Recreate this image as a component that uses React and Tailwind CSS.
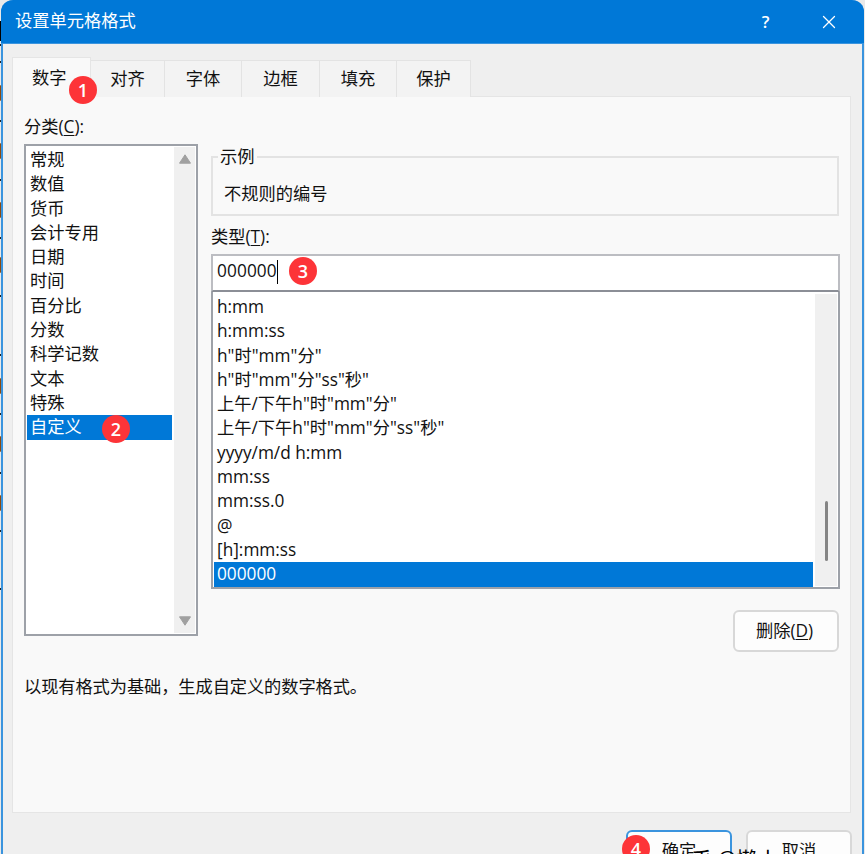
import { X } from 'lucide-react';

const TABS = [
  { label: '对齐', width: 'w-[74px]' },
  { label: '字体', width: 'w-[77px]' },
  { label: '边框', width: 'w-[78px]' },
  { label: '填充', width: 'w-[77px]' },
  { label: '保护', width: 'w-[74px]' },
];

const CATEGORIES = ['常规', '数值', '货币', '会计专用', '日期', '时间', '百分比', '分数', '科学记数', '文本', '特殊', '自定义'];

const FORMATS = [
  'h:mm',
  'h:mm:ss',
  'h"时"mm"分"',
  'h"时"mm"分"ss"秒"',
  '上午/下午h"时"mm"分"',
  '上午/下午h"时"mm"分"ss"秒"',
  'yyyy/m/d h:mm',
  'mm:ss',
  'mm:ss.0',
  '@',
  '[h]:mm:ss',
  '000000',
];

// worksheet rows that show in the strip left of the dialog
const SHEET_ROWS = [44, 61, 120, 179, 237, 295, 354, 413, 472, 530, 588];
const SHEET_DOTS = [93, 151, 210, 265, 386, 444, 503];

function Step({ n, className }) {
  return (
    <span className={`absolute flex h-7 w-7 items-center justify-center rounded-full bg-[#fd3438] text-[18px] leading-none font-semibold text-white ${className}`}>
      {n}
    </span>
  );
}

function Key({ children }) {
  return <span className="underline decoration-1 underline-offset-[2px]">{children}</span>;
}

export default function App() {
  return (
    <div className="relative h-[854px] w-[865px] overflow-hidden bg-[#e9e9e9] pl-[1px] font-['Open_Sans','Noto_Sans_CJK_SC',sans-serif] text-[17.25px] leading-6 text-[#111]">
      <div className="absolute top-[21px] left-0 h-[20px] w-[2px] bg-black" />
      {SHEET_ROWS.map((y) => (
        <div key={y} className="absolute left-0 h-[2px] w-[2px] bg-[#222]" style={{ top: y }} />
      ))}
      {SHEET_DOTS.map((y) => (
        <div key={y} className="absolute -left-1 h-4 w-[6px] rounded-full bg-[#8a4a10]" style={{ top: y - 8 }} />
      ))}

      <div className="relative flex h-[870px] w-[863px] flex-col rounded-t-[12px] border-x-2 border-[#3a94de] bg-[#efefef]">
        <header className="-mx-[2px] flex h-11 shrink-0 items-center rounded-t-[12px] border-b border-[#3a94de] bg-[#0078d7] pl-[14px] text-white">
          <span className="relative -top-[1px] grow">设置单元格格式</span>
          <span className="w-[15px] text-center text-[17px] font-semibold">?</span>
          <X className="mr-[24px] ml-[45px] h-[22px] w-[22px]" strokeWidth={1.4} />
        </header>

        <div className="pl-[9px]">
          <nav className="relative z-10 mt-[13px] flex h-10 items-end">
            <div className="relative h-[41px] w-[79px] self-start border border-b-0 border-[#e5e5e5] bg-[#f9f9f9] pt-[8px] pl-[19px]">
              数字
              <Step n={1} className="top-[18px] left-[56px]" />
            </div>
            {TABS.map((t) => (
              <div key={t.label} className={`-z-10 flex h-[37px] items-center justify-center border-t border-r border-[#e3e3e3] bg-[#f3f3f3] ${t.width}`}>
                {t.label}
              </div>
            ))}
          </nav>

          <main className="-mt-px flex h-[717px] w-[839px] flex-col border border-[#e5e5e5] bg-[#f9f9f9] pl-[11px]">
            <div className="flex">
              <section className="w-[174px] pt-[18px]">
                <div>分类(<Key>C</Key>):</div>
                <div className="mt-[5px] flex h-[492px] border-2 border-[#9da1a8] bg-white">
                  <ul className="w-[148px] pt-[2px] pr-[2px] pl-px">
                    {CATEGORIES.map((c, i) => (
                      <li key={c} className={`relative h-[24.3px] pl-[3px] ${i === 11 ? 'bg-[#0078d7] text-white' : ''}`}>
                        {c}
                        {i === 11 && <Step n={2} className="top-0 left-[75px]" />}
                      </li>
                    ))}
                  </ul>
                  <div className="my-px flex w-[21px] flex-col items-center justify-between bg-[#f0f0f0] py-[7px]">
                    <svg width="12" height="10" viewBox="0 0 12 10" fill="#a0a0a0"><path d="M6 .8 11.5 9.2H.5Z" stroke="#a0a0a0" strokeLinejoin="round" /></svg>
                    <svg width="12" height="10" viewBox="0 0 12 10" fill="#a0a0a0"><path d="M.5.8H11.5L6 9.2Z" stroke="#a0a0a0" strokeLinejoin="round" /></svg>
                  </div>
                </div>
              </section>

              <section className="ml-[13px] w-[629px] pt-[48px]">
                <fieldset className="h-[71px] w-[628px] border-2 border-[#e3e3e3] pl-[11px]">
                  <legend className="-ml-[6px] px-[2px]">示例</legend>
                  <div className="mt-[13px]">不规则的编号</div>
                </fieldset>
                <div className="mt-[9px]">类型(<Key>T</Key>):</div>
                <div className="relative mt-[5px] flex h-[38px] items-center border-2 border-[#bcbdc2] border-b-[#8b8e96] bg-white pl-[4px]">
                  <span className="relative -top-[2px] tracking-[0.1px]">000000</span>
                  <span className="relative -top-px h-6 w-[1.5px] bg-black" />
                  <Step n={3} className="top-[1px] left-[76px]" />
                </div>
                <div className="flex h-[297px] border-2 border-t-0 border-[#9da1a8] bg-white">
                  <ul className="w-[601px] pt-[3px] pr-px pl-px">
                    {FORMATS.map((f, i) => (
                      <li key={f} className={`h-[24.3px] pl-[3px] whitespace-pre ${i === 11 ? 'bg-[#0078d7] text-white' : ''}`}>
                        {f}
                      </li>
                    ))}
                  </ul>
                  <div className="mt-[2px] mb-px ml-px flex w-[22px] flex-col items-center bg-[#f0f0f0] pt-[207px]">
                    <div className="h-[60px] w-[3px] rounded bg-[#858585]" />
                  </div>
                </div>
                <button className="mt-[21px] ml-[522px] h-[42px] w-[106px] rounded-md border-2 border-[#d8d8d8] bg-[#fdfdfd] pr-[3px]">
                  删除(<Key>D</Key>)
                </button>
              </section>
            </div>
            <p className="mt-[23px] tracking-[-0.1px]">以现有格式为基础，生成自定义的数字格式。</p>
          </main>
        </div>

        <footer className="relative mt-[17px] flex justify-end gap-[14px] pr-[10px]">
          <button className="h-[42px] w-[106px] rounded-md border-2 border-[#3a94de] bg-[#fdfdfd]">确定</button>
          <button className="h-[42px] w-[106px] rounded-md border-2 border-[#d8d8d8] bg-[#fdfdfd]">取消</button>
          <Step n={4} className="top-[5px] left-[619px]" />
          {/* author mark, running off the bottom edge */}
          <span className="absolute top-[15px] left-[688px] text-[21px] leading-7 whitespace-pre text-black">乎 @懒小</span>
        </footer>
      </div>
    </div>
  );
}
